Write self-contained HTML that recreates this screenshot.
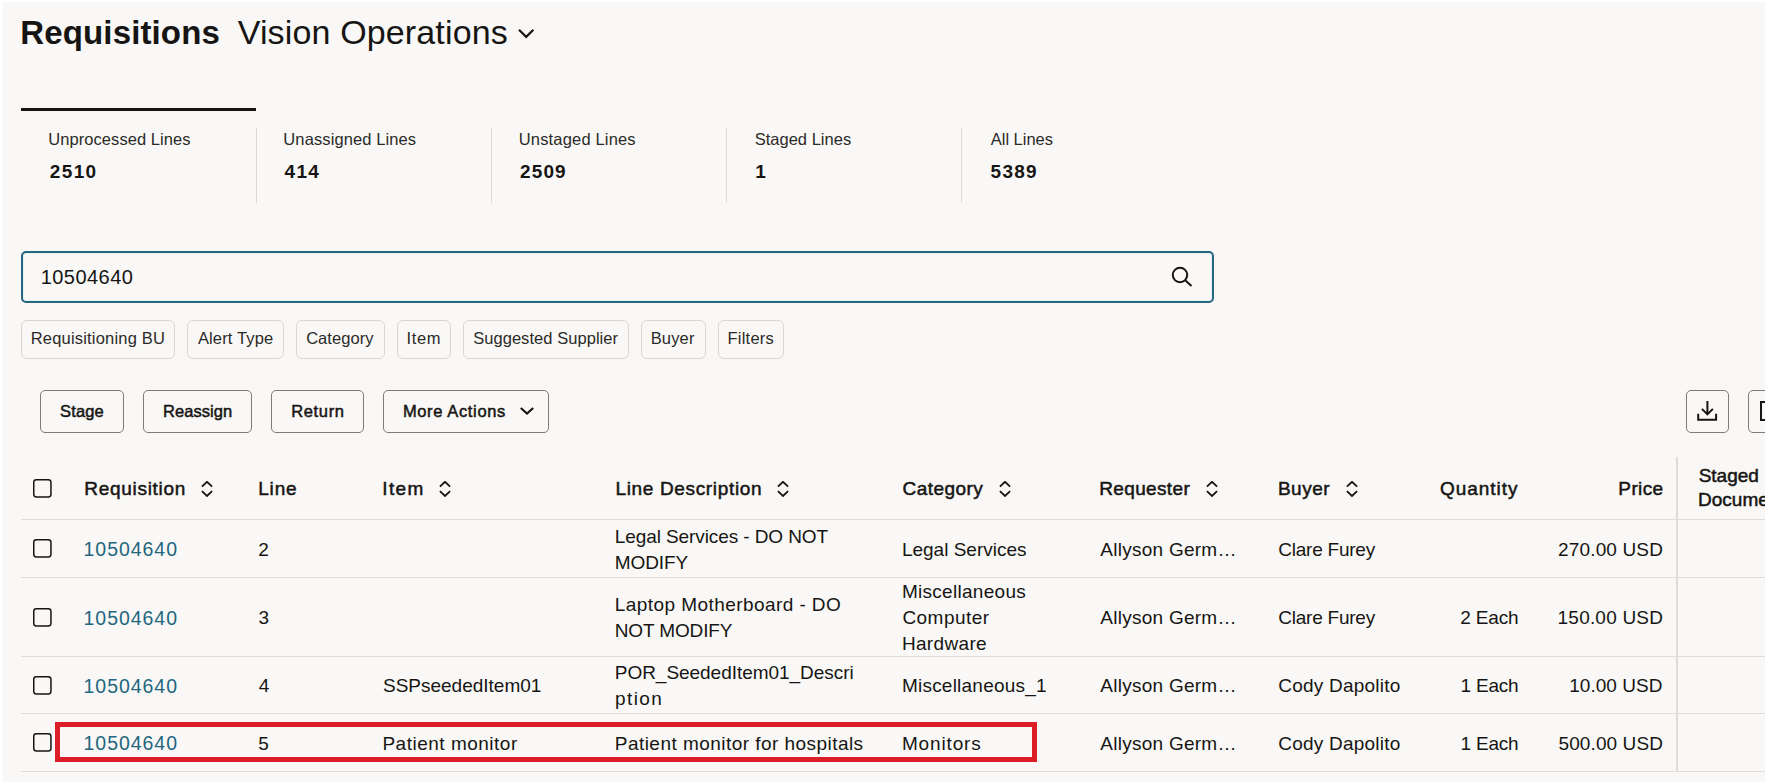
<!DOCTYPE html>
<html><head><meta charset="utf-8"><title>Requisitions</title>
<style>
html,body{margin:0;padding:0;}
body{width:1767px;height:782px;overflow:hidden;position:relative;background:#ffffff;font-family:"Liberation Sans",sans-serif;}
#pg{position:absolute;left:2px;top:2px;width:1763px;height:780px;background:#f9f8f6;overflow:hidden;}
#in{position:absolute;left:-2px;top:-2px;width:1767px;height:782px;}
.t{position:absolute;white-space:nowrap;}
</style></head><body><div id="pg"><div id="in">
<div class="t" style="left:20.30px;top:16.27px;font-size:33px;line-height:33px;font-weight:700;color:#161513;letter-spacing:0.136px;">Requisitions</div>
<div class="t" style="left:237.70px;top:15.42px;font-size:34px;line-height:34px;font-weight:400;color:#161513;letter-spacing:0.144px;">Vision Operations</div>
<svg style="position:absolute;left:518px;top:28px" width="17" height="11" viewBox="0 0 17 11"><path d="M1 1.8 L8.2 8.9 L15.4 1.8" fill="none" stroke="#161513" stroke-width="2.2"/></svg>
<div style="position:absolute;left:21px;top:108px;width:235px;height:3px;box-sizing:border-box;background:#161513"></div>
<div class="t" style="left:48.35px;top:131.33px;font-size:16.5px;line-height:16.5px;font-weight:400;color:#2b2a28;letter-spacing:0.056px;">Unprocessed Lines</div>
<div class="t" style="left:49.80px;top:161.72px;font-size:19px;line-height:19px;font-weight:700;color:#161513;letter-spacing:1.367px;">2510</div>
<div class="t" style="left:283.35px;top:131.33px;font-size:16.5px;line-height:16.5px;font-weight:400;color:#2b2a28;letter-spacing:0.107px;">Unassigned Lines</div>
<div class="t" style="left:284.60px;top:161.72px;font-size:19px;line-height:19px;font-weight:700;color:#161513;letter-spacing:1.250px;">414</div>
<div class="t" style="left:518.75px;top:131.33px;font-size:16.5px;line-height:16.5px;font-weight:400;color:#2b2a28;letter-spacing:0.169px;">Unstaged Lines</div>
<div class="t" style="left:520.00px;top:161.72px;font-size:19px;line-height:19px;font-weight:700;color:#161513;letter-spacing:1.133px;">2509</div>
<div class="t" style="left:754.65px;top:131.33px;font-size:16.5px;line-height:16.5px;font-weight:400;color:#2b2a28;letter-spacing:0.018px;">Staged Lines</div>
<div class="t" style="left:755.20px;top:161.72px;font-size:19px;line-height:19px;font-weight:700;color:#161513;">1</div>
<div class="t" style="left:990.75px;top:131.33px;font-size:16.5px;line-height:16.5px;font-weight:400;color:#2b2a28;letter-spacing:-0.012px;">All Lines</div>
<div class="t" style="left:990.60px;top:161.72px;font-size:19px;line-height:19px;font-weight:700;color:#161513;letter-spacing:1.267px;">5389</div>
<div style="position:absolute;left:256px;top:128px;width:1px;height:75px;box-sizing:border-box;background:#dcdad6"></div>
<div style="position:absolute;left:491px;top:128px;width:1px;height:75px;box-sizing:border-box;background:#dcdad6"></div>
<div style="position:absolute;left:726px;top:128px;width:1px;height:75px;box-sizing:border-box;background:#dcdad6"></div>
<div style="position:absolute;left:961px;top:128px;width:1px;height:75px;box-sizing:border-box;background:#dcdad6"></div>
<div style="position:absolute;left:21px;top:251px;width:1193px;height:52px;box-sizing:border-box;border:2px solid #28667f;border-radius:5px;box-shadow:inset 0 0 0 1px #e3f1f6;"></div>
<div class="t" style="left:40.70px;top:267.07px;font-size:20px;line-height:20px;font-weight:400;color:#161513;letter-spacing:0.457px;">10504640</div>
<svg style="position:absolute;left:1170px;top:265px" width="24" height="24" viewBox="0 0 24 24"><circle cx="10" cy="10" r="7.2" fill="none" stroke="#161513" stroke-width="2"/><path d="M15.2 15.2 L21.5 21" stroke="#161513" stroke-width="2" fill="none"/></svg>
<div style="position:absolute;left:21px;top:320px;width:154px;height:39px;box-sizing:border-box;border:1px solid #d9d7d3;border-radius:6px;"></div>
<div class="t" style="left:30.75px;top:330.23px;font-size:16.5px;line-height:16.5px;font-weight:400;color:#2b2a28;letter-spacing:0.188px;">Requisitioning BU</div>
<div style="position:absolute;left:187px;top:320px;width:97px;height:39px;box-sizing:border-box;border:1px solid #d9d7d3;border-radius:6px;"></div>
<div class="t" style="left:197.95px;top:330.23px;font-size:16.5px;line-height:16.5px;font-weight:400;color:#2b2a28;letter-spacing:0.133px;">Alert Type</div>
<div style="position:absolute;left:296px;top:320px;width:89px;height:39px;box-sizing:border-box;border:1px solid #d9d7d3;border-radius:6px;"></div>
<div class="t" style="left:306.15px;top:330.23px;font-size:16.5px;line-height:16.5px;font-weight:400;color:#2b2a28;letter-spacing:0.057px;">Category</div>
<div style="position:absolute;left:397px;top:320px;width:54px;height:39px;box-sizing:border-box;border:1px solid #d9d7d3;border-radius:6px;"></div>
<div class="t" style="left:406.55px;top:330.23px;font-size:16.5px;line-height:16.5px;font-weight:400;color:#2b2a28;letter-spacing:0.633px;">Item</div>
<div style="position:absolute;left:463px;top:320px;width:166px;height:39px;box-sizing:border-box;border:1px solid #d9d7d3;border-radius:6px;"></div>
<div class="t" style="left:473.15px;top:330.23px;font-size:16.5px;line-height:16.5px;font-weight:400;color:#2b2a28;letter-spacing:0.053px;">Suggested Supplier</div>
<div style="position:absolute;left:641px;top:320px;width:65px;height:39px;box-sizing:border-box;border:1px solid #d9d7d3;border-radius:6px;"></div>
<div class="t" style="left:650.65px;top:330.23px;font-size:16.5px;line-height:16.5px;font-weight:400;color:#2b2a28;letter-spacing:0.175px;">Buyer</div>
<div style="position:absolute;left:718px;top:320px;width:66px;height:39px;box-sizing:border-box;border:1px solid #d9d7d3;border-radius:6px;"></div>
<div class="t" style="left:727.55px;top:330.23px;font-size:16.5px;line-height:16.5px;font-weight:400;color:#2b2a28;letter-spacing:0.217px;">Filters</div>
<div style="position:absolute;left:40px;top:390px;width:84px;height:43px;box-sizing:border-box;border:1px solid #7d7b78;border-radius:5px;"></div>
<div class="t" style="left:60.00px;top:402.63px;font-size:16.5px;line-height:16.5px;font-weight:400;-webkit-text-stroke:0.5px #161513;color:#161513;letter-spacing:0.150px;">Stage</div>
<div style="position:absolute;left:143px;top:390px;width:109px;height:43px;box-sizing:border-box;border:1px solid #7d7b78;border-radius:5px;"></div>
<div class="t" style="left:162.90px;top:402.63px;font-size:16.5px;line-height:16.5px;font-weight:400;-webkit-text-stroke:0.5px #161513;color:#161513;letter-spacing:0.086px;">Reassign</div>
<div style="position:absolute;left:271px;top:390px;width:93px;height:43px;box-sizing:border-box;border:1px solid #7d7b78;border-radius:5px;"></div>
<div class="t" style="left:291.20px;top:402.63px;font-size:16.5px;line-height:16.5px;font-weight:400;-webkit-text-stroke:0.5px #161513;color:#161513;letter-spacing:0.660px;">Return</div>
<div style="position:absolute;left:383px;top:390px;width:166px;height:43px;box-sizing:border-box;border:1px solid #7d7b78;border-radius:5px;"></div>
<div class="t" style="left:402.90px;top:402.63px;font-size:16.5px;line-height:16.5px;font-weight:400;-webkit-text-stroke:0.5px #161513;color:#161513;letter-spacing:0.636px;">More Actions</div>
<svg style="position:absolute;left:518px;top:404px" width="17" height="13" viewBox="0 0 17 13"><path d="M2.8 4 L9 9.6 L15.2 4" fill="none" stroke="#161513" stroke-width="2.1"/></svg>
<div style="position:absolute;left:1686px;top:390px;width:43px;height:43px;box-sizing:border-box;border:1px solid #7d7b78;border-radius:5px;"></div>
<svg style="position:absolute;left:1696px;top:400px" width="23" height="23" viewBox="0 0 23 23"><path d="M11.4 1 V14.3 M5.9 8.9 L11.4 14.4 L16.9 8.9" fill="none" stroke="#161513" stroke-width="2"/><path d="M2.2 13.8 V19.8 H20.1 V13.8" fill="none" stroke="#161513" stroke-width="2"/></svg>
<div style="position:absolute;left:1748px;top:390px;width:43px;height:43px;box-sizing:border-box;border:1px solid #7d7b78;border-radius:5px;"></div>
<div style="position:absolute;left:1760px;top:401px;width:8px;height:20px;border:2.5px solid #161513;border-right:none;box-sizing:border-box"></div>
<svg style="position:absolute;left:33px;top:479px" width="19" height="19" viewBox="0 0 19 19"><rect x="0.75" y="0.75" width="17.2" height="17.2" rx="2.6" fill="none" stroke="#161513" stroke-width="1.5"/></svg>
<div class="t" style="left:84.25px;top:478.72px;font-size:19px;line-height:19px;font-weight:400;-webkit-text-stroke:0.5px #161513;color:#161513;letter-spacing:0.710px;">Requisition</div>
<svg style="position:absolute;left:200.5px;top:481px" width="12" height="17" viewBox="0 0 12 17"><path d="M0.9 5.7 L6 0.8 L11.1 5.7 M0.9 10.1 L6 15 L11.1 10.1" fill="none" stroke="#161513" stroke-width="1.8"/></svg>
<div class="t" style="left:258.15px;top:478.72px;font-size:19px;line-height:19px;font-weight:400;-webkit-text-stroke:0.5px #161513;color:#161513;letter-spacing:0.867px;">Line</div>
<div class="t" style="left:382.25px;top:478.72px;font-size:19px;line-height:19px;font-weight:400;-webkit-text-stroke:0.5px #161513;color:#161513;letter-spacing:1.400px;">Item</div>
<svg style="position:absolute;left:438.5px;top:481px" width="12" height="17" viewBox="0 0 12 17"><path d="M0.9 5.7 L6 0.8 L11.1 5.7 M0.9 10.1 L6 15 L11.1 10.1" fill="none" stroke="#161513" stroke-width="1.8"/></svg>
<div class="t" style="left:615.45px;top:478.72px;font-size:19px;line-height:19px;font-weight:400;-webkit-text-stroke:0.5px #161513;color:#161513;letter-spacing:0.660px;">Line Description</div>
<svg style="position:absolute;left:776.8px;top:481px" width="12" height="17" viewBox="0 0 12 17"><path d="M0.9 5.7 L6 0.8 L11.1 5.7 M0.9 10.1 L6 15 L11.1 10.1" fill="none" stroke="#161513" stroke-width="1.8"/></svg>
<div class="t" style="left:902.55px;top:478.72px;font-size:19px;line-height:19px;font-weight:400;-webkit-text-stroke:0.5px #161513;color:#161513;letter-spacing:0.443px;">Category</div>
<svg style="position:absolute;left:999.1px;top:481px" width="12" height="17" viewBox="0 0 12 17"><path d="M0.9 5.7 L6 0.8 L11.1 5.7 M0.9 10.1 L6 15 L11.1 10.1" fill="none" stroke="#161513" stroke-width="1.8"/></svg>
<div class="t" style="left:1099.25px;top:478.72px;font-size:19px;line-height:19px;font-weight:400;-webkit-text-stroke:0.5px #161513;color:#161513;letter-spacing:0.350px;">Requester</div>
<svg style="position:absolute;left:1205.8px;top:481px" width="12" height="17" viewBox="0 0 12 17"><path d="M0.9 5.7 L6 0.8 L11.1 5.7 M0.9 10.1 L6 15 L11.1 10.1" fill="none" stroke="#161513" stroke-width="1.8"/></svg>
<div class="t" style="left:1277.95px;top:478.72px;font-size:19px;line-height:19px;font-weight:400;-webkit-text-stroke:0.5px #161513;color:#161513;letter-spacing:0.500px;">Buyer</div>
<svg style="position:absolute;left:1346.0px;top:481px" width="12" height="17" viewBox="0 0 12 17"><path d="M0.9 5.7 L6 0.8 L11.1 5.7 M0.9 10.1 L6 15 L11.1 10.1" fill="none" stroke="#161513" stroke-width="1.8"/></svg>
<div class="t" style="left:1439.95px;top:478.72px;font-size:19px;line-height:19px;font-weight:400;-webkit-text-stroke:0.5px #161513;color:#161513;letter-spacing:0.971px;">Quantity</div>
<div class="t" style="left:1618.35px;top:478.72px;font-size:19px;line-height:19px;font-weight:400;-webkit-text-stroke:0.5px #161513;color:#161513;letter-spacing:0.375px;">Price</div>
<div class="t" style="left:1698.65px;top:466.32px;font-size:19px;line-height:19px;font-weight:400;-webkit-text-stroke:0.5px #161513;color:#161513;">Staged</div>
<div class="t" style="left:1698.05px;top:490.12px;font-size:19px;line-height:19px;font-weight:400;-webkit-text-stroke:0.5px #161513;color:#161513;">Document</div>
<div style="position:absolute;left:1676px;top:457px;width:2px;height:315px;box-sizing:border-box;background:#dedcd8"></div>
<div style="position:absolute;left:21px;top:519px;width:1746px;height:1px;box-sizing:border-box;background:#dfddd9"></div>
<div style="position:absolute;left:21px;top:577px;width:1746px;height:1px;box-sizing:border-box;background:#dfddd9"></div>
<div style="position:absolute;left:21px;top:656px;width:1746px;height:1px;box-sizing:border-box;background:#dfddd9"></div>
<div style="position:absolute;left:21px;top:713px;width:1746px;height:1px;box-sizing:border-box;background:#dfddd9"></div>
<div style="position:absolute;left:21px;top:771px;width:1746px;height:1px;box-sizing:border-box;background:#dfddd9"></div>
<svg style="position:absolute;left:33px;top:539px" width="19" height="19" viewBox="0 0 19 19"><rect x="0.75" y="0.75" width="17.2" height="17.2" rx="2.6" fill="none" stroke="#161513" stroke-width="1.5"/></svg>
<div class="t" style="left:83.55px;top:540.49px;font-size:19.5px;line-height:19.5px;font-weight:400;color:#23667e;letter-spacing:0.957px;">10504640</div>
<div class="t" style="left:258.20px;top:539.92px;font-size:19px;line-height:19px;font-weight:400;color:#161513;">2</div>
<div class="t" style="left:614.80px;top:526.92px;font-size:19px;line-height:19px;font-weight:400;color:#161513;letter-spacing:-0.095px;">Legal Services - DO NOT</div>
<div class="t" style="left:614.80px;top:552.92px;font-size:19px;line-height:19px;font-weight:400;color:#161513;letter-spacing:-0.100px;">MODIFY</div>
<div class="t" style="left:901.90px;top:539.92px;font-size:19px;line-height:19px;font-weight:400;color:#161513;letter-spacing:-0.000px;">Legal Services</div>
<div class="t" style="left:1100.30px;top:539.92px;font-size:19px;line-height:19px;font-weight:400;color:#161513;letter-spacing:0.258px;">Allyson Germ…</div>
<div class="t" style="left:1278.30px;top:539.92px;font-size:19px;line-height:19px;font-weight:400;color:#161513;letter-spacing:-0.240px;">Clare Furey</div>
<div class="t" style="left:1558.10px;top:539.92px;font-size:19px;line-height:19px;font-weight:400;color:#161513;letter-spacing:0.144px;">270.00 USD</div>
<svg style="position:absolute;left:33px;top:608px" width="19" height="19" viewBox="0 0 19 19"><rect x="0.75" y="0.75" width="17.2" height="17.2" rx="2.6" fill="none" stroke="#161513" stroke-width="1.5"/></svg>
<div class="t" style="left:83.55px;top:608.99px;font-size:19.5px;line-height:19.5px;font-weight:400;color:#23667e;letter-spacing:0.957px;">10504640</div>
<div class="t" style="left:258.40px;top:608.42px;font-size:19px;line-height:19px;font-weight:400;color:#161513;">3</div>
<div class="t" style="left:614.80px;top:595.42px;font-size:19px;line-height:19px;font-weight:400;color:#161513;letter-spacing:0.432px;">Laptop Motherboard - DO</div>
<div class="t" style="left:614.80px;top:621.42px;font-size:19px;line-height:19px;font-weight:400;color:#161513;letter-spacing:-0.144px;">NOT MODIFY</div>
<div class="t" style="left:901.90px;top:582.42px;font-size:19px;line-height:19px;font-weight:400;color:#161513;letter-spacing:0.292px;">Miscellaneous</div>
<div class="t" style="left:902.40px;top:608.42px;font-size:19px;line-height:19px;font-weight:400;color:#161513;letter-spacing:0.457px;">Computer</div>
<div class="t" style="left:901.90px;top:634.42px;font-size:19px;line-height:19px;font-weight:400;color:#161513;letter-spacing:0.343px;">Hardware</div>
<div class="t" style="left:1100.30px;top:608.42px;font-size:19px;line-height:19px;font-weight:400;color:#161513;letter-spacing:0.258px;">Allyson Germ…</div>
<div class="t" style="left:1278.30px;top:608.42px;font-size:19px;line-height:19px;font-weight:400;color:#161513;letter-spacing:-0.240px;">Clare Furey</div>
<div class="t" style="left:1460.20px;top:608.42px;font-size:19px;line-height:19px;font-weight:400;color:#161513;letter-spacing:-0.140px;">2 Each</div>
<div class="t" style="left:1557.60px;top:608.42px;font-size:19px;line-height:19px;font-weight:400;color:#161513;letter-spacing:0.200px;">150.00 USD</div>
<svg style="position:absolute;left:33px;top:676px" width="19" height="19" viewBox="0 0 19 19"><rect x="0.75" y="0.75" width="17.2" height="17.2" rx="2.6" fill="none" stroke="#161513" stroke-width="1.5"/></svg>
<div class="t" style="left:83.55px;top:676.99px;font-size:19.5px;line-height:19.5px;font-weight:400;color:#23667e;letter-spacing:0.957px;">10504640</div>
<div class="t" style="left:258.70px;top:676.42px;font-size:19px;line-height:19px;font-weight:400;color:#161513;">4</div>
<div class="t" style="left:383.00px;top:676.42px;font-size:19px;line-height:19px;font-weight:400;color:#161513;letter-spacing:-0.007px;">SSPseededItem01</div>
<div class="t" style="left:614.80px;top:663.42px;font-size:19px;line-height:19px;font-weight:400;color:#161513;letter-spacing:-0.036px;">POR_SeededItem01_Descri</div>
<div class="t" style="left:615.10px;top:689.42px;font-size:19px;line-height:19px;font-weight:400;color:#161513;letter-spacing:1.375px;">ption</div>
<div class="t" style="left:901.90px;top:676.42px;font-size:19px;line-height:19px;font-weight:400;color:#161513;letter-spacing:0.229px;">Miscellaneous_1</div>
<div class="t" style="left:1100.30px;top:676.42px;font-size:19px;line-height:19px;font-weight:400;color:#161513;letter-spacing:0.258px;">Allyson Germ…</div>
<div class="t" style="left:1278.30px;top:676.42px;font-size:19px;line-height:19px;font-weight:400;color:#161513;letter-spacing:0.217px;">Cody Dapolito</div>
<div class="t" style="left:1460.60px;top:676.42px;font-size:19px;line-height:19px;font-weight:400;color:#161513;letter-spacing:-0.220px;">1 Each</div>
<div class="t" style="left:1569.20px;top:676.42px;font-size:19px;line-height:19px;font-weight:400;color:#161513;letter-spacing:0.050px;">10.00 USD</div>
<svg style="position:absolute;left:33px;top:733px" width="19" height="19" viewBox="0 0 19 19"><rect x="0.75" y="0.75" width="17.2" height="17.2" rx="2.6" fill="none" stroke="#161513" stroke-width="1.5"/></svg>
<div class="t" style="left:83.55px;top:734.49px;font-size:19.5px;line-height:19.5px;font-weight:400;color:#23667e;letter-spacing:0.957px;">10504640</div>
<div class="t" style="left:258.30px;top:733.92px;font-size:19px;line-height:19px;font-weight:400;color:#161513;">5</div>
<div class="t" style="left:382.40px;top:733.92px;font-size:19px;line-height:19px;font-weight:400;color:#161513;letter-spacing:0.507px;">Patient monitor</div>
<div class="t" style="left:614.80px;top:733.92px;font-size:19px;line-height:19px;font-weight:400;color:#161513;letter-spacing:0.457px;">Patient monitor for hospitals</div>
<div class="t" style="left:901.90px;top:733.92px;font-size:19px;line-height:19px;font-weight:400;color:#161513;letter-spacing:0.857px;">Monitors</div>
<div class="t" style="left:1100.30px;top:733.92px;font-size:19px;line-height:19px;font-weight:400;color:#161513;letter-spacing:0.258px;">Allyson Germ…</div>
<div class="t" style="left:1278.30px;top:733.92px;font-size:19px;line-height:19px;font-weight:400;color:#161513;letter-spacing:0.217px;">Cody Dapolito</div>
<div class="t" style="left:1460.60px;top:733.92px;font-size:19px;line-height:19px;font-weight:400;color:#161513;letter-spacing:-0.220px;">1 Each</div>
<div class="t" style="left:1558.50px;top:733.92px;font-size:19px;line-height:19px;font-weight:400;color:#161513;letter-spacing:0.100px;">500.00 USD</div>
<div style="position:absolute;left:55px;top:722px;width:982px;height:40px;box-sizing:border-box;border:5px solid #dc1e28;"></div>
</div></div></body></html>
